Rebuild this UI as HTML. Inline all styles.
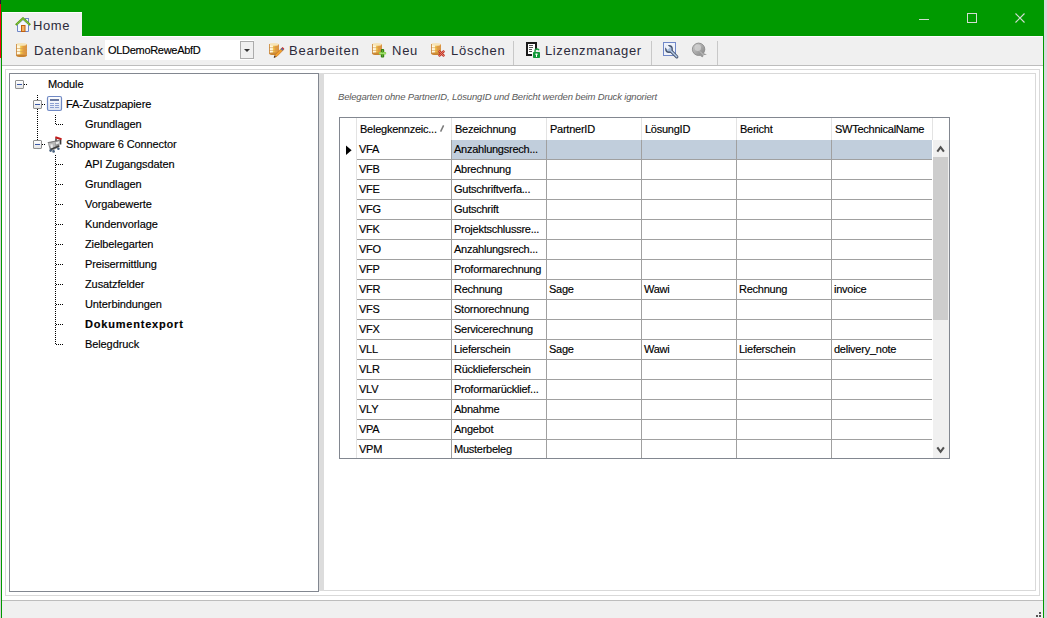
<!DOCTYPE html>
<html><head><meta charset="utf-8"><style>
*{margin:0;padding:0;box-sizing:border-box}
html,body{width:1047px;height:618px;overflow:hidden;background:#f0f0f0;font-family:"Liberation Sans",sans-serif;position:relative}
.a{position:absolute}
.tt{font-size:13px;color:#2c2a3a;white-space:nowrap;top:43px;line-height:16px;letter-spacing:0.75px}
.sep{width:1px;background:#c8c8c8;top:41px;height:24px}
.gt{font-size:11px;line-height:13px;color:#000;white-space:nowrap;-webkit-text-stroke:0.15px #000}
.g{letter-spacing:-0.25px}
.dv{width:1px;background:repeating-linear-gradient(to bottom,#000 0 1px,transparent 1px 2px)}
.dh{height:1px;background:repeating-linear-gradient(to right,#000 0 1px,transparent 1px 2px)}
.ebox{width:9px;height:9px;border:1px solid #919191;border-radius:1px;background:linear-gradient(#fff,#e6e6e6)}
.ebox i{position:absolute;left:1px;top:3px;width:5px;height:1px;background:#3c5aa8}
.note{font-size:9.5px;font-style:italic;color:#5a5a5a;white-space:nowrap;letter-spacing:-0.16px}
svg{position:absolute;overflow:visible}
</style></head><body>
<div class="a" style="left:0;top:0;width:1044px;height:36px;background:#009a00"></div>
<div class="a" style="left:2px;top:12px;width:80px;height:25px;background:#f0f0f0;border-top:1px solid #fff"></div>
<div class="a" style="left:2px;top:36px;width:1041px;height:30px;background:#f0f0f0;border-bottom:1px solid #bdbdbd"></div>
<div class="a" style="left:82px;top:36px;width:961px;height:1px;background:#fff"></div>
<div class="a" style="left:2px;top:66px;width:1041px;height:534px;background:#fff"></div>
<div class="a" style="left:2px;top:600px;width:1041px;height:18px;background:#f0f0f0;border-top:1px solid #bdbdbd"></div>
<div class="a" style="left:0;top:0;width:1px;height:4px;background:#201830"></div>
<div class="a" style="left:0;top:4px;width:1px;height:54px;background:#f00010"></div>
<div class="a" style="left:0;top:58px;width:1px;height:560px;background:#dcd0dc"></div>
<div class="a" style="left:1px;top:0;width:1px;height:618px;background:#009a00"></div>
<div class="a" style="left:1043px;top:0;width:1px;height:618px;background:#009a00"></div>
<div class="a" style="left:1044px;top:0;width:3px;height:618px;background:#dcd8dc"></div>
<div class="a" style="left:919px;top:19px;width:10px;height:1px;background:#d2dcd2"></div>
<div class="a" style="left:967px;top:13px;width:10px;height:10px;border:1px solid #d2dcd2"></div>
<svg style="left:1015px;top:13px" width="10" height="10"><path d="M0.5 0.5L9.5 9.5M9.5 0.5L0.5 9.5" stroke="#d2dcd2" stroke-width="1.1"/></svg>
<div class="a" style="left:1039px;top:612px;width:2px;height:2px;background:#555"></div>
<div class="a" style="left:1036px;top:615px;width:2px;height:2px;background:#555"></div>
<div class="a" style="left:1039px;top:615px;width:2px;height:2px;background:#555"></div>
<div class="a tt" style="left:33px;top:18px;letter-spacing:0.6px">Home</div>
<div class="a tt" style="left:34px">Datenbank</div>
<div class="a" style="left:105px;top:40px;width:149px;height:20px;background:#fff"></div>
<div class="a" style="left:240px;top:41px;width:14px;height:18px;border:1px solid #acacac;background:#f0f0f0"></div>
<div class="a" style="left:244px;top:49px;width:0;height:0;border-left:3px solid transparent;border-right:3px solid transparent;border-top:3px solid #333"></div>
<div class="a gt" style="left:108px;top:44px;letter-spacing:-0.3px">OLDemoReweAbfD</div>
<div class="a tt" style="left:289px">Bearbeiten</div>
<div class="a tt" style="left:392px">Neu</div>
<div class="a tt" style="left:451px">Löschen</div>
<div class="a sep" style="left:513px"></div>
<div class="a tt" style="left:545px;letter-spacing:0.6px">Lizenzmanager</div>
<div class="a sep" style="left:651px"></div>
<div class="a sep" style="left:717px"></div>
<div class="a" style="left:5px;top:69px;width:1035px;height:527px;border:1px solid #d9d9d9"></div>
<div class="a" style="left:9px;top:73px;width:310px;height:519px;border:1px solid #828790;background:#fff"></div>
<div class="a" style="left:324px;top:73px;width:712px;height:518px;border:1px solid #d9d9d9;border-left:0;background:#fff"></div>
<div class="a" style="left:319px;top:73px;width:5px;height:518px;background:#dcdcdc"></div>
<div class="a ebox" style="left:15px;top:80px"><i></i></div>
<div class="a dh" style="left:24px;top:84px;width:3px"></div>
<div class="a gt" style="left:48px;top:78px;letter-spacing:-0.1px">Module</div>
<div class="a dv" style="left:37px;top:95px;height:5px"></div>
<div class="a ebox" style="left:33px;top:100px"><i></i></div>
<div class="a dh" style="left:42px;top:104px;width:3px"></div>
<div class="a gt" style="left:66px;top:98px;letter-spacing:-0.1px">FA-Zusatzpapiere</div>
<div class="a dv" style="left:37px;top:109px;height:31px"></div>
<div class="a dv" style="left:55px;top:115px;height:10px"></div>
<div class="a dh" style="left:56px;top:124px;width:7px"></div>
<div class="a gt" style="left:85px;top:118px;letter-spacing:-0.1px">Grundlagen</div>
<div class="a ebox" style="left:33px;top:140px"><i></i></div>
<div class="a dh" style="left:42px;top:144px;width:3px"></div>
<div class="a gt" style="left:66px;top:138px;letter-spacing:-0.1px">Shopware 6 Connector</div>
<div class="a dv" style="left:55px;top:155px;height:190px"></div>
<div class="a dh" style="left:56px;top:164px;width:7px"></div>
<div class="a gt" style="left:85px;top:158px;letter-spacing:-0.1px">API Zugangsdaten</div>
<div class="a dh" style="left:56px;top:184px;width:7px"></div>
<div class="a gt" style="left:85px;top:178px;letter-spacing:-0.1px">Grundlagen</div>
<div class="a dh" style="left:56px;top:204px;width:7px"></div>
<div class="a gt" style="left:85px;top:198px;letter-spacing:-0.1px">Vorgabewerte</div>
<div class="a dh" style="left:56px;top:224px;width:7px"></div>
<div class="a gt" style="left:85px;top:218px;letter-spacing:-0.1px">Kundenvorlage</div>
<div class="a dh" style="left:56px;top:244px;width:7px"></div>
<div class="a gt" style="left:85px;top:238px;letter-spacing:-0.1px">Zielbelegarten</div>
<div class="a dh" style="left:56px;top:264px;width:7px"></div>
<div class="a gt" style="left:85px;top:258px;letter-spacing:-0.1px">Preisermittlung</div>
<div class="a dh" style="left:56px;top:284px;width:7px"></div>
<div class="a gt" style="left:85px;top:278px;letter-spacing:-0.1px">Zusatzfelder</div>
<div class="a dh" style="left:56px;top:304px;width:7px"></div>
<div class="a gt" style="left:85px;top:298px;letter-spacing:-0.1px">Unterbindungen</div>
<div class="a dh" style="left:56px;top:324px;width:7px"></div>
<div class="a gt" style="left:85px;top:318px;font-weight:bold;letter-spacing:0.8px">Dokumentexport</div>
<div class="a dh" style="left:56px;top:344px;width:7px"></div>
<div class="a gt" style="left:85px;top:338px;letter-spacing:-0.1px">Belegdruck</div>
<div class="a note" style="left:338px;top:90.6px">Belegarten ohne PartnerID, LösungID und Bericht werden beim Druck ignoriert</div>
<div class="a" style="left:339px;top:117px;width:611px;height:342px;border:1px solid #828790;background:#fff;overflow:hidden">
<div class="a" style="left:16px;top:0;width:1px;height:22px;background:#e3e3e3"></div>
<div class="a" style="left:111px;top:0;width:1px;height:22px;background:#e3e3e3"></div>
<div class="a" style="left:206px;top:0;width:1px;height:22px;background:#e3e3e3"></div>
<div class="a" style="left:301px;top:0;width:1px;height:22px;background:#e3e3e3"></div>
<div class="a" style="left:396px;top:0;width:1px;height:22px;background:#e3e3e3"></div>
<div class="a" style="left:491px;top:0;width:1px;height:22px;background:#e3e3e3"></div>
<div class="a" style="left:592px;top:0;width:1px;height:22px;background:#e3e3e3"></div>
<div class="a" style="left:16px;top:22px;width:1px;height:320px;background:#e3e3e3"></div>
<div class="a gt g" style="left:20px;top:5px">Belegkennzeic...</div>
<div class="a gt g" style="left:115px;top:5px">Bezeichnung</div>
<div class="a gt g" style="left:210px;top:5px">PartnerID</div>
<div class="a gt g" style="left:305px;top:5px">LösungID</div>
<div class="a gt g" style="left:400px;top:5px">Bericht</div>
<div class="a gt g" style="left:495px;top:5px">SWTechnicalName</div>
<svg style="left:100px;top:7px" width="4" height="7"><path d="M3.6 0.4L0.6 6.6" stroke="#7a7a7a" stroke-width="1.5"/></svg>
<div class="a" style="left:112px;top:22px;width:480px;height:19px;background:#c1cedc"></div>
<div class="a" style="left:17px;top:41px;width:575px;height:1px;background:#a0a0a0"></div>
<div class="a" style="left:17px;top:61px;width:575px;height:1px;background:#a0a0a0"></div>
<div class="a" style="left:17px;top:81px;width:575px;height:1px;background:#a0a0a0"></div>
<div class="a" style="left:17px;top:101px;width:575px;height:1px;background:#a0a0a0"></div>
<div class="a" style="left:17px;top:121px;width:575px;height:1px;background:#a0a0a0"></div>
<div class="a" style="left:17px;top:141px;width:575px;height:1px;background:#a0a0a0"></div>
<div class="a" style="left:17px;top:161px;width:575px;height:1px;background:#a0a0a0"></div>
<div class="a" style="left:17px;top:181px;width:575px;height:1px;background:#a0a0a0"></div>
<div class="a" style="left:17px;top:201px;width:575px;height:1px;background:#a0a0a0"></div>
<div class="a" style="left:17px;top:221px;width:575px;height:1px;background:#a0a0a0"></div>
<div class="a" style="left:17px;top:241px;width:575px;height:1px;background:#a0a0a0"></div>
<div class="a" style="left:17px;top:261px;width:575px;height:1px;background:#a0a0a0"></div>
<div class="a" style="left:17px;top:281px;width:575px;height:1px;background:#a0a0a0"></div>
<div class="a" style="left:17px;top:301px;width:575px;height:1px;background:#a0a0a0"></div>
<div class="a" style="left:17px;top:321px;width:575px;height:1px;background:#a0a0a0"></div>
<div class="a" style="left:17px;top:341px;width:575px;height:1px;background:#a0a0a0"></div>
<div class="a" style="left:111px;top:22px;width:1px;height:320px;background:#a0a0a0"></div>
<div class="a" style="left:206px;top:22px;width:1px;height:320px;background:#a0a0a0"></div>
<div class="a" style="left:301px;top:22px;width:1px;height:320px;background:#a0a0a0"></div>
<div class="a" style="left:396px;top:22px;width:1px;height:320px;background:#a0a0a0"></div>
<div class="a" style="left:491px;top:22px;width:1px;height:320px;background:#a0a0a0"></div>
<div class="a gt g" style="left:19px;top:25px">VFA</div>
<div class="a gt g" style="left:114px;top:25px">Anzahlungsrech...</div>
<div class="a gt g" style="left:19px;top:45px">VFB</div>
<div class="a gt g" style="left:114px;top:45px">Abrechnung</div>
<div class="a gt g" style="left:19px;top:65px">VFE</div>
<div class="a gt g" style="left:114px;top:65px">Gutschriftverfa...</div>
<div class="a gt g" style="left:19px;top:85px">VFG</div>
<div class="a gt g" style="left:114px;top:85px">Gutschrift</div>
<div class="a gt g" style="left:19px;top:105px">VFK</div>
<div class="a gt g" style="left:114px;top:105px">Projektschlussre...</div>
<div class="a gt g" style="left:19px;top:125px">VFO</div>
<div class="a gt g" style="left:114px;top:125px">Anzahlungsrech...</div>
<div class="a gt g" style="left:19px;top:145px">VFP</div>
<div class="a gt g" style="left:114px;top:145px">Proformarechnung</div>
<div class="a gt g" style="left:19px;top:165px">VFR</div>
<div class="a gt g" style="left:114px;top:165px">Rechnung</div>
<div class="a gt g" style="left:209px;top:165px">Sage</div>
<div class="a gt g" style="left:304px;top:165px">Wawi</div>
<div class="a gt g" style="left:399px;top:165px">Rechnung</div>
<div class="a gt g" style="left:494px;top:165px">invoice</div>
<div class="a gt g" style="left:19px;top:185px">VFS</div>
<div class="a gt g" style="left:114px;top:185px">Stornorechnung</div>
<div class="a gt g" style="left:19px;top:205px">VFX</div>
<div class="a gt g" style="left:114px;top:205px">Servicerechnung</div>
<div class="a gt g" style="left:19px;top:225px">VLL</div>
<div class="a gt g" style="left:114px;top:225px">Lieferschein</div>
<div class="a gt g" style="left:209px;top:225px">Sage</div>
<div class="a gt g" style="left:304px;top:225px">Wawi</div>
<div class="a gt g" style="left:399px;top:225px">Lieferschein</div>
<div class="a gt g" style="left:494px;top:225px">delivery_note</div>
<div class="a gt g" style="left:19px;top:245px">VLR</div>
<div class="a gt g" style="left:114px;top:245px">Rücklieferschein</div>
<div class="a gt g" style="left:19px;top:265px">VLV</div>
<div class="a gt g" style="left:114px;top:265px">Proformarücklief...</div>
<div class="a gt g" style="left:19px;top:285px">VLY</div>
<div class="a gt g" style="left:114px;top:285px">Abnahme</div>
<div class="a gt g" style="left:19px;top:305px">VPA</div>
<div class="a gt g" style="left:114px;top:305px">Angebot</div>
<div class="a gt g" style="left:19px;top:325px">VPM</div>
<div class="a gt g" style="left:114px;top:325px">Musterbeleg</div>
<svg style="left:5px;top:27px" width="8" height="11"><path d="M1 0.6L6.6 5.3L1 10Z" fill="#000"/></svg>
<div class="a" style="left:593px;top:22px;width:16px;height:318px;background:#f0f0f0"></div>
<div class="a" style="left:593px;top:39px;width:15px;height:163px;background:#cdcdcd"></div>
<svg style="left:596px;top:27px" width="10" height="8"><path d="M1.3 6.6L4.6 2.2L7.9 6.6" fill="none" stroke="#505050" stroke-width="2.1"/></svg>
<svg style="left:596px;top:328px" width="10" height="8"><path d="M1.3 1.4L4.6 5.8L7.9 1.4" fill="none" stroke="#505050" stroke-width="2.1"/></svg>
</div>
<svg class="a" style="left:0;top:0" width="1047" height="618" viewBox="0 0 1047 618">
<defs>
<linearGradient id="gold" x1="0" x2="1" y1="0" y2="0">
<stop offset="0" stop-color="#f2d8a8"/><stop offset="0.15" stop-color="#fffbe8"/><stop offset="0.35" stop-color="#fff4d0"/><stop offset="0.42" stop-color="#f4cc50"/><stop offset="0.65" stop-color="#e4a040"/><stop offset="1" stop-color="#d89040"/>
</linearGradient>
<linearGradient id="gray" x1="0" x2="1" y1="0" y2="1">
<stop offset="0" stop-color="#cfcfcf"/><stop offset="1" stop-color="#858585"/>
</linearGradient>
<linearGradient id="fa" x1="0" x2="0" y1="0" y2="1">
<stop offset="0" stop-color="#ffffff"/><stop offset="1" stop-color="#dde4f2"/>
</linearGradient>
</defs>
<g>
<rect x="25.5" y="18.5" width="3" height="5" fill="#eef3fc" stroke="#6f86c6" stroke-width="1"/>
<path d="M17.5 31.5V24.5L23 19.5L28.5 24.5V31.5Z" fill="#f2f6fd" stroke="#6f86c6" stroke-width="1"/>
<path d="M15.8 25L23 18.2L30.2 25" fill="none" stroke="#5aa01a" stroke-width="2.1" stroke-linejoin="round"/>
<path d="M16.8 24.4L23 18.6L29.2 24.4" fill="none" stroke="#a8dc50" stroke-width="0.7"/>
<rect x="21.5" y="25.5" width="3.5" height="6" fill="#f0b060" stroke="#c06010" stroke-width="1"/>
</g>
<g transform="translate(16,43)">
<rect x="0" y="1" width="11" height="12" fill="url(#gold)"/>
<ellipse cx="5.5" cy="1.4" rx="5.2" ry="1.4" fill="#f6e4b8"/>
<ellipse cx="5.5" cy="12.8" rx="5.2" ry="1.2" fill="#c9832e"/>
<rect x="0" y="5.04" width="11" height="0.8" fill="#d49a50" opacity="0.75"/>
<rect x="0" y="8.12" width="11" height="0.8" fill="#d49a50" opacity="0.75"/>
<rect x="0" y="11.200000000000001" width="11" height="0.8" fill="#d49a50" opacity="0.75"/>
<rect x="0" y="1" width="1" height="12" fill="#c8843a" opacity="0.8"/>
</g>
<g transform="translate(269,43)">
<rect x="0" y="1" width="10" height="10" fill="url(#gold)"/>
<ellipse cx="5.0" cy="1.4" rx="4.7" ry="1.4" fill="#f6e4b8"/>
<ellipse cx="5.0" cy="10.8" rx="4.7" ry="1.2" fill="#c9832e"/>
<rect x="0" y="4.32" width="10" height="0.8" fill="#d49a50" opacity="0.75"/>
<rect x="0" y="6.959999999999999" width="10" height="0.8" fill="#d49a50" opacity="0.75"/>
<rect x="0" y="9.600000000000001" width="10" height="0.8" fill="#d49a50" opacity="0.75"/>
<rect x="0" y="1" width="1" height="10" fill="#c8843a" opacity="0.8"/>
</g>
<path d="M274 57.5L275.3 54.5L282 47.8L283.8 49.5L277 56.3Z" fill="#f0a030" stroke="#c06a10" stroke-width="0.6"/>
<path d="M281.2 48.5L282.6 47.1L284.3 48.8L282.9 50.2Z" fill="#d03030"/>
<path d="M280.6 49.1L281.8 47.9L283.5 49.6L282.3 50.8Z" fill="#5070b0"/>
<path d="M273.8 57.8L274.5 55.6L275.9 57Z" fill="#202840"/>
<g transform="translate(372,43)">
<rect x="0" y="1" width="10" height="10" fill="url(#gold)"/>
<ellipse cx="5.0" cy="1.4" rx="4.7" ry="1.4" fill="#f6e4b8"/>
<ellipse cx="5.0" cy="10.8" rx="4.7" ry="1.2" fill="#c9832e"/>
<rect x="0" y="4.32" width="10" height="0.8" fill="#d49a50" opacity="0.75"/>
<rect x="0" y="6.959999999999999" width="10" height="0.8" fill="#d49a50" opacity="0.75"/>
<rect x="0" y="9.600000000000001" width="10" height="0.8" fill="#d49a50" opacity="0.75"/>
<rect x="0" y="1" width="1" height="10" fill="#c8843a" opacity="0.8"/>
</g>
<rect x="380.8" y="49" width="3.4" height="8.4" rx="1" fill="#2f7a12"/>
<rect x="378.8" y="52" width="7.4" height="2.6" rx="1" fill="#86d048"/>
<rect x="381.8" y="49.8" width="1.4" height="6.8" fill="#5fae2c"/>
<rect x="379.5" y="52.8" width="6" height="1" fill="#b0e880"/>
<g transform="translate(431,43)">
<rect x="0" y="1" width="10" height="10" fill="url(#gold)"/>
<ellipse cx="5.0" cy="1.4" rx="4.7" ry="1.4" fill="#f6e4b8"/>
<ellipse cx="5.0" cy="10.8" rx="4.7" ry="1.2" fill="#c9832e"/>
<rect x="0" y="4.32" width="10" height="0.8" fill="#d49a50" opacity="0.75"/>
<rect x="0" y="6.959999999999999" width="10" height="0.8" fill="#d49a50" opacity="0.75"/>
<rect x="0" y="9.600000000000001" width="10" height="0.8" fill="#d49a50" opacity="0.75"/>
<rect x="0" y="1" width="1" height="10" fill="#c8843a" opacity="0.8"/>
</g>
<path d="M438.8 50.8L444.2 56.2M444.2 50.8L438.8 56.2" stroke="#c03828" stroke-width="2.4"/>
<path d="M438.8 50.8L444.2 56.2M444.2 50.8L438.8 56.2" stroke="#e88070" stroke-width="0.9"/>
<path d="M527 43H536V49.5" fill="none" stroke="#1a1a1a" stroke-width="2"/>
<path d="M527 43V55H531.5" fill="none" stroke="#1a1a1a" stroke-width="2"/>
<rect x="528" y="44" width="7" height="10" fill="#fff"/>
<rect x="527" y="42" width="10" height="2" fill="#1a1a1a"/>
<rect x="526" y="42" width="2" height="14" fill="#1a1a1a"/>
<rect x="535" y="42" width="2" height="7" fill="#1a1a1a"/>
<rect x="526" y="54" width="6" height="2" fill="#1a1a1a"/>
<rect x="529" y="45" width="4" height="1" fill="#555"/>
<rect x="529" y="47" width="4" height="1" fill="#555"/>
<rect x="529" y="49" width="3" height="1" fill="#555"/>
<rect x="529" y="51" width="3" height="1" fill="#555"/>
<path d="M535 52.5V50.8Q535 49 537 49Q538.6 49 539 50.3" fill="none" stroke="#139a3a" stroke-width="1.4"/>
<rect x="533" y="52" width="7" height="6" rx="0.8" fill="#139a3a"/>
<rect x="536" y="54" width="1" height="3" fill="#fff"/>
<rect x="535.5" y="53.5" width="2" height="1.5" fill="#fff"/>
<rect x="663.5" y="42.5" width="12" height="13" fill="#eef2fb" stroke="#7088c8" stroke-width="1"/>
<path d="M670.5 50.5L676.8 56.8" stroke="#46546e" stroke-width="3.2" stroke-linecap="round"/>
<circle cx="669" cy="49" r="3.9" fill="#46546e"/>
<path d="M670.5 50.5L676.8 56.8" stroke="#b8cdea" stroke-width="1.4" stroke-linecap="round"/>
<circle cx="669" cy="49" r="2.5" fill="#a8bedc"/>
<path d="M664.8 47L667.2 44.6L670 47.4L667.6 49.8Z" fill="#eef2fb"/>
<circle cx="698.6" cy="49.3" r="6.2" fill="url(#gray)" stroke="#8a8a8a" stroke-width="0.9"/>
<circle cx="697.8" cy="47.8" r="3.2" fill="#d2d2d2" opacity="0.8"/>
<path d="M700.5 52L707 54.4L703.4 55.2L703 57.2L701.2 56.8L699.8 55Z" fill="#9a9a9a"/>
<path d="M700 51.5L703.5 55" stroke="#cfcfcf" stroke-width="0.8"/>
<rect x="47.5" y="96.5" width="14" height="14" rx="1.5" fill="url(#fa)" stroke="#7089c4" stroke-width="1.2"/>
<rect x="50" y="99" width="9" height="2" fill="#6878a0"/>
<g fill="#8ca0d2"><rect x="50" y="103" width="4" height="1"/><rect x="55" y="103" width="4" height="1"/>
<rect x="50" y="105" width="4" height="1"/><rect x="55" y="105" width="4" height="1"/>
<rect x="50" y="107" width="4" height="1"/><rect x="55" y="107" width="4" height="1"/></g>
<path d="M56 141V138.2M60.6 144.5V139.2" stroke="#3a3a3a" stroke-width="1.5"/>
<path d="M55.3 137.3L61.5 139.3" stroke="#c41a1a" stroke-width="2"/>
<path d="M47.8 142.6L59.9 140.2L59.3 147L52.2 150.8L49.8 149.8Z" fill="#8e8e8e"/>
<path d="M48.3 143L55.2 141.8L55.6 148.9L51.4 149.6Z" fill="#b8b8b8"/>
<path d="M50.4 144.6L52.6 144.2L53 148.4L51.3 148.8Z" fill="#ececec"/>
<path d="M55.6 142L59.2 141.2L59 143.4L56 144.6Z" fill="#e6e6e6"/>
<path d="M50.5 149.5L59.2 146" stroke="#3e3e3e" stroke-width="1.5"/>
<path d="M47.8 142.6L59.9 140.2" stroke="#6a6a6a" stroke-width="0.8"/>
<circle cx="50.6" cy="150.6" r="1.3" fill="#46607e"/>
<circle cx="53.6" cy="151.4" r="1.3" fill="#46607e"/>
<circle cx="58.4" cy="148.8" r="1.3" fill="#46607e"/>
</svg>
</body></html>
